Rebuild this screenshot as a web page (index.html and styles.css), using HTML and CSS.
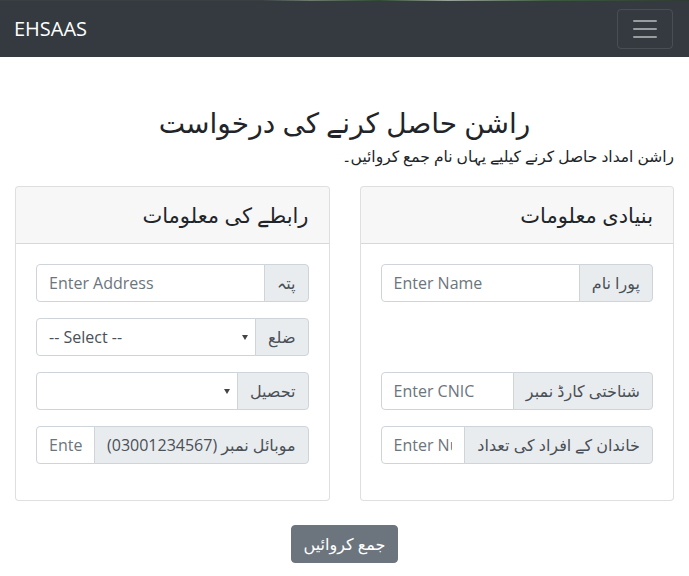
FILE: index.html
```html
<!DOCTYPE html>
<html lang="ur">
<head>
<meta charset="utf-8">
<title>EHSAAS</title>
<link rel="stylesheet" href="styles.css">
</head>
<body>
<div class="topstrip"></div>
<nav class="navbar">
  <a class="brand" href="#">EHSAAS</a>
  <button class="toggler" type="button" aria-label="Toggle navigation">
    <svg width="30" height="30" viewBox="0 0 30 30"><path stroke="rgba(255,255,255,0.5)" stroke-linecap="round" stroke-miterlimit="10" stroke-width="2" d="M4 7h22M4 15h22M4 23h22"/></svg>
  </button>
</nav>
<main class="page" dir="rtl">
  <h2 class="title">راشن حاصل کرنے کی درخواست</h2>
  <p class="lead">راشن امداد حاصل کرنے کیلیے یہاں نام جمع کروائیں۔</p>
  <div class="cards">
    <section class="card">
      <div class="card-header">بنیادی معلومات</div>
      <div class="card-body">
        <div class="input-group">
          <span class="addon">پورا نام</span>
          <input class="control" dir="ltr" type="text" placeholder="Enter Name">
        </div>
        <div class="spacer"></div>
        <div class="input-group">
          <span class="addon">شناختی کارڈ نمبر</span>
          <input class="control" dir="ltr" type="text" placeholder="Enter CNIC">
        </div>
        <div class="input-group">
          <span class="addon">خاندان کے افراد کی تعداد</span>
          <input class="control" dir="ltr" type="text" placeholder="Enter Number">
        </div>
      </div>
    </section>
    <section class="card">
      <div class="card-header">رابطے کی معلومات</div>
      <div class="card-body">
        <div class="input-group">
          <span class="addon">پتہ</span>
          <input class="control" dir="ltr" type="text" placeholder="Enter Address">
        </div>
        <div class="input-group">
          <span class="addon">ضلع</span>
          <div class="select-wrap" dir="ltr">
            <select class="control select"><option>-- Select --</option></select>
            <span class="arrow"></span>
          </div>
        </div>
        <div class="input-group">
          <span class="addon">تحصیل</span>
          <div class="select-wrap" dir="ltr">
            <select class="control select"><option></option></select>
            <span class="arrow"></span>
          </div>
        </div>
        <div class="input-group">
          <span class="addon">موبائل نمبر (03001234567)</span>
          <input class="control" dir="ltr" type="text" placeholder="Enter Mobile Number">
        </div>
      </div>
    </section>
  </div>
  <div class="actions">
    <button class="btn" type="submit">جمع کروائیں</button>
  </div>
</main>
</body>
</html>
```
FILE: styles.css
```css
* { box-sizing: border-box; }
html, body { margin: 0; }
body {
  font-family: "Open Sans", "DejaVu Sans", sans-serif;
  font-size: 16px;
  line-height: 1.5;
  color: #212529;
  background: #fff;
}
.topstrip {
  height: 1px;
  background: linear-gradient(90deg, #3a3f44 0%, #3a3f44 38%, #6d7a70 45%, #2f4a33 55%, #9aa29c 65%, #3b5a3e 80%, #2f3a33 100%);
}
.navbar {
  height: 56px;
  background: #343a40;
  display: flex;
  align-items: center;
  justify-content: space-between;
  padding: 8px 16px 8px 14px;
}
.brand {
  color: #fff;
  text-decoration: none;
  font-size: 20px;
  line-height: 30px;
}
.toggler {
  width: 56px;
  height: 40px;
  padding: 4px 12px;
  background: transparent;
  border: 1px solid rgba(255,255,255,0.1);
  border-radius: 4px;
  display: flex;
  align-items: center;
  justify-content: center;
}
.toggler svg { display: block; }
.page {
  padding: 0 15px;
}
.title {
  margin: 47px 0 4px;
  text-align: center;
  font-size: 28px;
  font-weight: 500;
  line-height: 36px;
}
.lead {
  margin: 0 0 18px;
  font-size: 15.5px;
  line-height: 24px;
}
.cards {
  display: grid;
  grid-template-columns: 1fr 1fr;
  column-gap: 30px;
}
.card {
  border: 1px solid rgba(0,0,0,0.125);
  border-radius: 4px;
  background: #fff;
  overflow: hidden;
}
.card-header {
  padding: 12px 20px;
  background: rgba(0,0,0,0.03);
  border-bottom: 1px solid rgba(0,0,0,0.125);
  font-size: 21px;
  line-height: 32px;
}
.card-body {
  padding: 20px;
}
.input-group {
  display: flex;
  height: 38px;
  margin-bottom: 16px;
}
.spacer {
  height: 38px;
  margin-bottom: 16px;
}
.addon {
  flex: 0 0 auto;
  display: flex;
  align-items: center;
  padding: 6px 12px;
  background: #e9ecef;
  border: 1px solid #ced4da;
  border-radius: 0 4px 4px 0;
  color: #495057;
  font-size: 16px;
  white-space: nowrap;
  margin-left: -1px;
  position: relative;
  z-index: 1;
}
.control {
  flex: 1 1 auto;
  width: 1%;
  min-width: 0;
  height: 38px;
  padding: 6px 12px;
  border: 1px solid #ced4da;
  border-radius: 4px 0 0 4px;
  background: #fff;
  color: #495057;
  font-family: "Open Sans", "DejaVu Sans", sans-serif;
  font-size: 16px;
  line-height: 24px;
  outline: none;
}
.control::placeholder { color: #6c757d; opacity: 1; }
.select-wrap {
  flex: 1 1 auto;
  width: 1%;
  display: flex;
  position: relative;
}
.select {
  width: 100%;
  appearance: none;
  -webkit-appearance: none;
  padding-right: 24px;
}
.arrow {
  position: absolute;
  right: 8px;
  top: 17px;
  width: 0;
  height: 0;
  border-left: 3px solid transparent;
  border-right: 3px solid transparent;
  border-top: 5px solid #444;
}
.actions {
  display: flex;
  justify-content: center;
  margin-top: 24px;
}
.btn {
  font-family: "Open Sans", "DejaVu Sans", sans-serif;
  font-size: 16px;
  line-height: 24px;
  padding: 6px 12px;
  color: #fff;
  background: #6c757d;
  border: 1px solid #6c757d;
  border-radius: 4px;
}
```
